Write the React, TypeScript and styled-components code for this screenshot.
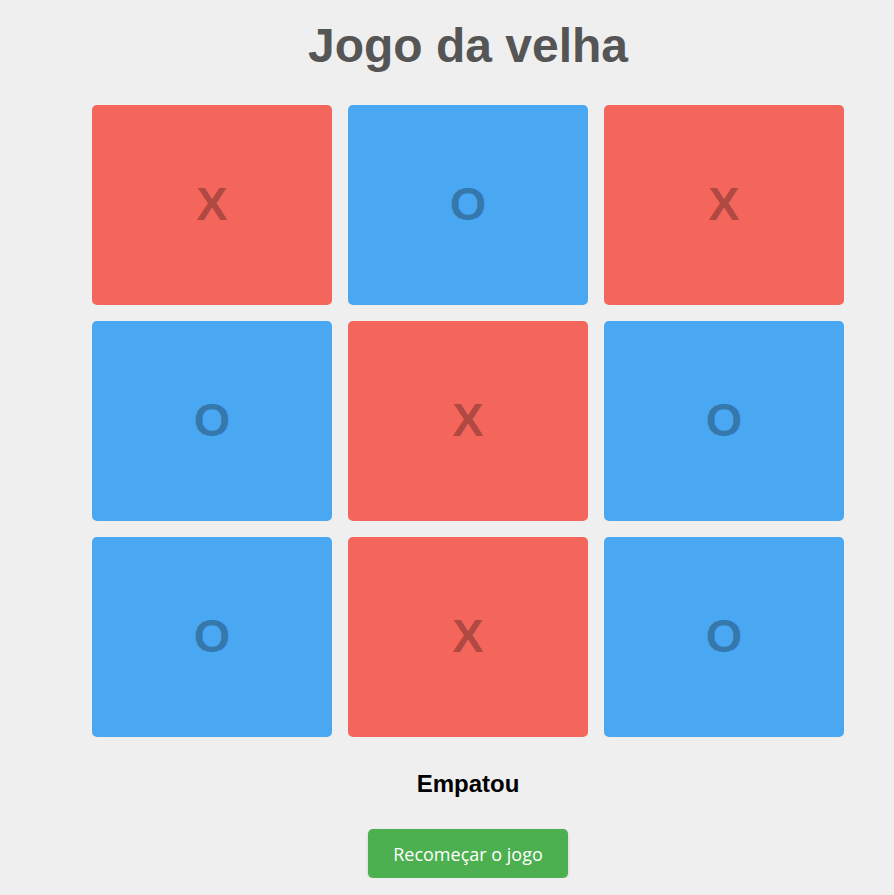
import styled, { createGlobalStyle } from "styled-components";

type Mark = "X" | "O";

const board: Mark[] = ["X", "O", "X", "O", "X", "O", "O", "X", "O"];

export default function App() {
  return (
    <>
      <GlobalStyle />
      <Page>
        <Title>Jogo da velha</Title>
        <Board>
          {board.map((mark, i) => (
            <Cell key={i} $mark={mark}>
              {mark}
            </Cell>
          ))}
        </Board>
        <Status>Empatou</Status>
        <Button>Recomeçar o jogo</Button>
      </Page>
    </>
  );
}

const GlobalStyle = createGlobalStyle`
  body {
    margin: 0;
    background-color: #efefef;
    font-family: "Liberation Sans", Arial, sans-serif;
  }
`;

const Page = styled.div`
  display: flex;
  flex-direction: column;
  align-items: center;
  padding-left: 42px;
`;

const Title = styled.h1`
  font-size: 48px;
  font-weight: bold;
  color: #555555;
  margin: 18px 0 32px;
`;

const Board = styled.div`
  display: grid;
  grid-template-columns: repeat(3, 240px);
  grid-auto-rows: 200px;
  gap: 16px;
`;

const Cell = styled.div<{ $mark: Mark }>`
  display: flex;
  justify-content: center;
  align-items: center;
  padding-bottom: 3px;
  box-sizing: border-box;
  border-radius: 5px;
  background-color: ${(p) => (p.$mark === "X" ? "#f4665b" : "#4aa7f2")};
  color: rgba(0, 0, 0, 0.3);
  font-size: 47px;
  font-weight: bold;
`;

const Status = styled.h2`
  font-size: 24px;
  font-weight: bold;
  color: #000;
  margin: 33px 0 31px;
`;

const Button = styled.button`
  width: 200px;
  height: 49px;
  background-color: #4caf50;
  color: #fff;
  border: none;
  border-radius: 5px;
  font-family: "Open Sans", sans-serif;
  font-size: 18px;
  cursor: pointer;
  box-shadow: 0 1px 3px rgba(0, 0, 0, 0.15);
`;
